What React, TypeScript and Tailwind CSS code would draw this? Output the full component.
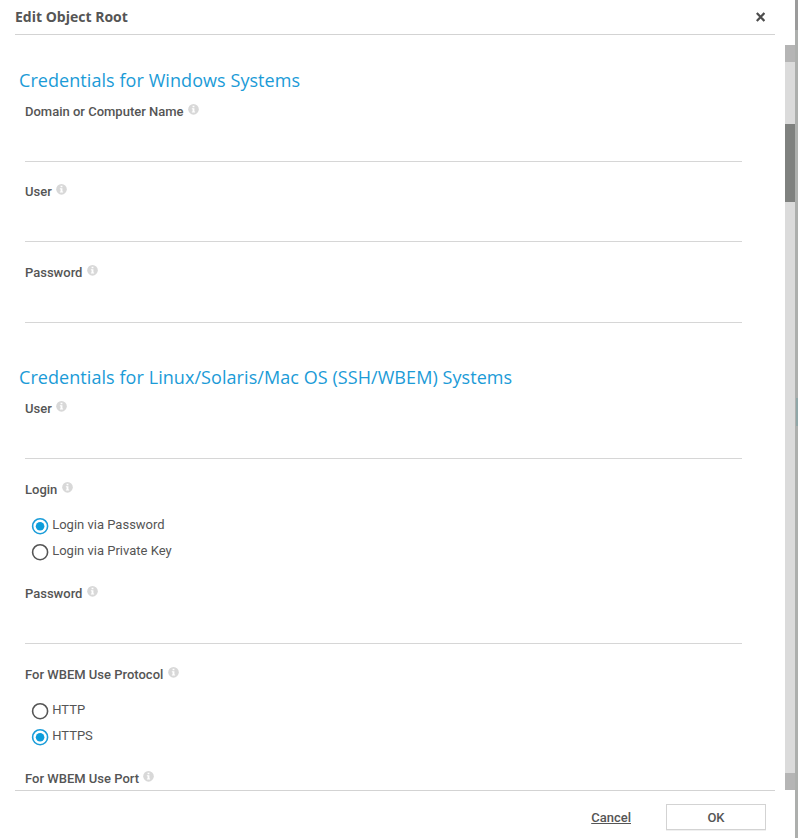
import { useState } from "react";

type RadioGroupProps = {
  name: string;
  options: string[];
  value: string;
  onChange: (value: string) => void;
};

function InfoIcon() {
  return (
    <svg
      width="11"
      height="11"
      viewBox="0 0 12 12"
      className="ml-[4.4px] mt-[3px] shrink-0"
      aria-hidden="true"
    >
      <circle cx="6" cy="5.8" r="5.8" fill="#d8d8d8" />
      <path d="M5 1.8h2v1.7H5zM4.2 4.5H7v3.6h.8v1.3H4.2V8.1H5V5.8h-.8z" fill="#fff" />
    </svg>
  );
}

function Label({ text }: { text: string }) {
  return (
    <div className="flex h-5 items-start text-[13px] font-medium leading-5">
      <span className="mt-px">{text}</span>
      <InfoIcon />
    </div>
  );
}

function Field({ label, type = "text" }: { label: string; type?: string }) {
  return (
    <div>
      <Label text={label} />
      <input
        type={type}
        aria-label={label}
        className="block h-[41px] w-full border-b border-[#d6d6d6] bg-transparent text-[13px] outline-none"
      />
    </div>
  );
}

function RadioGroup({ name, options, value, onChange }: RadioGroupProps) {
  return (
    <div className="mt-3.5 pl-[7px]">
      {options.map((option) => {
        const checked = option === value;
        return (
          <label key={option} className="flex h-[26px] items-start">
            <input
              type="radio"
              name={name}
              checked={checked}
              onChange={() => onChange(option)}
              className="sr-only"
            />
            <svg
              width="17"
              height="17"
              viewBox="0 0 17 17"
              className="mt-[5px] shrink-0 overflow-visible"
            >
              <circle
                cx="8.1"
                cy="8.2"
                r="7.5"
                fill="none"
                stroke={checked ? "#1b9dd9" : "#555"}
                strokeWidth="1.6"
              />
              {checked && <circle cx="8.1" cy="8.2" r="4.3" fill="#0c9ddb" />}
            </svg>
            <span className="ml-[3.2px] mt-[2px] text-[13px] leading-5">{option}</span>
          </label>
        );
      })}
    </div>
  );
}

function SectionTitle({ children }: { children: string }) {
  return (
    <h2 className="-ml-1.5 mb-1.5 h-[30px] font-['Open_Sans',sans-serif] text-[18px] leading-[30px] tracking-[0.065px] text-[#1b9bd7]">
      {children}
    </h2>
  );
}

export default function App() {
  const [login, setLogin] = useState("Login via Password");
  const [protocol, setProtocol] = useState("HTTPS");

  return (
    <div className="flex h-[838px] w-[798px] overflow-hidden bg-white font-['Roboto',sans-serif] text-[#555]">
      <div className="flex w-[795px] flex-col">
        <header className="ml-[15px] flex h-[35px] w-[760px] items-center justify-between border-b border-[#d3d3d3] pr-[10px] font-['Open_Sans',sans-serif]">
          <h1 className="text-[14px] font-bold leading-5">Edit Object Root</h1>
          <button aria-label="Close" className="p-0">
            <svg width="9" height="10" viewBox="0 0 9 10">
              <path d="M.8 1l7.6 8M8.4 1L.8 9" stroke="#4d4d4d" strokeWidth="2.3" />
            </svg>
          </button>
        </header>

        <div className="flex h-[755px] justify-between overflow-hidden">
          <main className="w-[742px] shrink-0 pl-[25px] pt-[30px]">
            <section>
              <SectionTitle>Credentials for Windows Systems</SectionTitle>
              <div className="mb-[19px]">
                <Field label="Domain or Computer Name" />
              </div>
              <div className="space-y-5">
                <Field label="User" />
                <Field label="Password" type="password" />
              </div>
            </section>

            <section className="mt-[39px]">
              <SectionTitle>{"Credentials for Linux/Solaris/Mac OS (SSH/WBEM) Systems"}</SectionTitle>
              <Field label="User" />
              <div className="mb-[18px] mt-5">
                <Label text="Login" />
                <RadioGroup
                  name="login"
                  options={["Login via Password", "Login via Private Key"]}
                  value={login}
                  onChange={setLogin}
                />
              </div>
              <Field label="Password" type="password" />
              <div className="mb-[18px] mt-5">
                <Label text="For WBEM Use Protocol" />
                <RadioGroup
                  name="protocol"
                  options={["HTTP", "HTTPS"]}
                  value={protocol}
                  onChange={setProtocol}
                />
              </div>
              <Field label="For WBEM Use Port" />
            </section>
          </main>

          {/* scrollbar */}
          <div className="mt-[10px] flex h-[745px] w-[10px] flex-col bg-[#dbdbdb]">
            <div className="h-[17px] bg-[#b5b5b5]" />
            <div className="mt-[62px] h-[78px] bg-[#7f817f]" />
            <div className="mt-auto h-[17px] bg-[#b5b5b5]" />
          </div>
        </div>

        <footer className="ml-[15px] flex h-12 w-[760px] items-start justify-end border-t border-[#d3d3d3] pr-[9px] pt-[13px] text-[13px] font-medium">
          <button className="mr-[35px] h-[26px] pt-px leading-[26px] underline">Cancel</button>
          <button className="h-[26px] w-[100px] border border-[#d3d3d3] pt-px leading-[23px] shadow-[0_1px_0_#f0f0f0]">
            OK
          </button>
        </footer>
      </div>

      {/* dimmed page behind the dialog */}
      <div className="flex w-[3px] flex-col bg-[#adafad]">
        <div className="h-[30px] bg-[#9b9b9b]" />
        <div className="ml-px mt-[368px] h-7 bg-[#91a7a8]" />
      </div>
    </div>
  );
}
